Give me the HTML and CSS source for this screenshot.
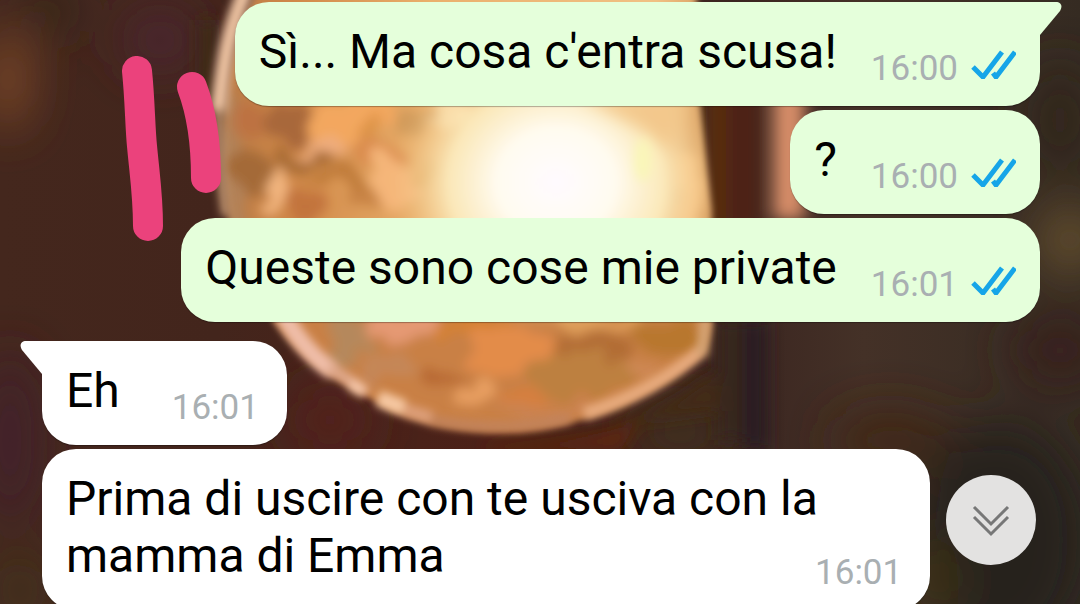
FILE: index.html
```
<!DOCTYPE html>
<html lang="it">
<head>
    <meta charset="UTF-8">
    <meta name="viewport" content="width=device-width, initial-scale=1.0">
    <title>Chat</title>
    <link rel="stylesheet" href="styles.css">
</head>
<body>
    <!-- wallpaper -->
    <svg class="wallpaper" viewBox="0 0 1080 604" preserveAspectRatio="xMidYMid slice" aria-hidden="true">
        <defs>
            <linearGradient id="wall" x1="0" y1="0" x2="1" y2="0">
                <stop offset="0" stop-color="#44271d"/>
                <stop offset=".2" stop-color="#43251c"/>
                <stop offset=".45" stop-color="#4c2118"/>
                <stop offset=".68" stop-color="#3b2520"/>
                <stop offset=".8" stop-color="#443127"/>
                <stop offset="1" stop-color="#352b22"/>
            </linearGradient>
            <linearGradient id="glass" x1="0" y1="0" x2="1" y2="0">
                <stop offset="0" stop-color="#a86f42"/>
                <stop offset=".2" stop-color="#d08848"/>
                <stop offset=".45" stop-color="#eab06c"/>
                <stop offset=".85" stop-color="#f1c184"/>
                <stop offset="1" stop-color="#c88a4c"/>
            </linearGradient>
            <radialGradient id="shine">
                <stop offset="0" stop-color="#fffaff"/>
                <stop offset=".35" stop-color="#fffbf0"/>
                <stop offset=".65" stop-color="#fdf0c4" stop-opacity=".85"/>
                <stop offset="1" stop-color="#f5c987" stop-opacity="0"/>
            </radialGradient>
            <filter id="b3" x="-50%" y="-50%" width="200%" height="200%"><feGaussianBlur stdDeviation="3"/></filter>
            <filter id="b4" x="-50%" y="-50%" width="200%" height="200%"><feGaussianBlur stdDeviation="4"/></filter>
            <filter id="b8" x="-50%" y="-50%" width="200%" height="200%"><feGaussianBlur stdDeviation="8"/></filter>
            <filter id="b24" x="-100%" y="-100%" width="300%" height="300%"><feGaussianBlur stdDeviation="24"/></filter>
            <!-- breaks the blobs up so that they look like light in glass -->
            <filter id="ripple" x="-20%" y="-20%" width="140%" height="140%">
                <feTurbulence type="fractalNoise" baseFrequency="0.028" numOctaves="2" seed="4" result="n"/>
                <feDisplacementMap in="SourceGraphic" in2="n" scale="50" xChannelSelector="R" yChannelSelector="G"/>
                <feGaussianBlur stdDeviation="5"/>
            </filter>
            <clipPath id="bowl"><path d="M262 -20 C224 50 214 130 226 210 C240 280 280 345 330 375 L390 410 C430 427 470 433 515 432 C580 428 650 400 700 356 C716 340 712 300 712 210 L700 100 L696 -20Z"/></clipPath>
        </defs>
        <rect width="1080" height="604" fill="url(#wall)"/>
        <g filter="url(#b24)">
            <ellipse cx="8" cy="80" rx="18" ry="50" fill="#87502a"/>
            <ellipse cx="160" cy="40" rx="36" ry="30" fill="#4b2630"/>
            <ellipse cx="50" cy="10" rx="30" ry="24" fill="#35261f"/>
            <ellipse cx="10" cy="440" rx="30" ry="90" fill="#43232a"/>
            <ellipse cx="20" cy="590" rx="30" ry="40" fill="#43301b"/>
            <ellipse cx="1060" cy="120" rx="34" ry="60" fill="#30261c"/>
            <ellipse cx="1070" cy="240" rx="34" ry="34" fill="#65502f"/>
            <ellipse cx="1060" cy="350" rx="50" ry="40" fill="#39221f"/>
            <ellipse cx="1000" cy="540" rx="90" ry="120" fill="#25201e"/>
            <ellipse cx="930" cy="580" rx="30" ry="40" fill="#3c3018"/>
            <ellipse cx="890" cy="440" rx="60" ry="30" fill="#3f2619"/>
            <ellipse cx="330" cy="420" rx="40" ry="40" fill="#53241e"/>
            <ellipse cx="680" cy="430" rx="50" ry="24" fill="#40311f"/>
        </g>
        <g filter="url(#b8)">
            <rect x="706" y="90" width="24" height="140" fill="#5a2f10"/>
            <rect x="726" y="90" width="36" height="140" fill="#4e2113"/>
            <rect x="773" y="70" width="32" height="150" fill="#d58c68"/>
            <rect x="718" y="320" width="24" height="120" fill="#38281f"/>
            <rect x="742" y="320" width="26" height="130" fill="#2b1d20"/>
            <rect x="200" y="20" width="14" height="110" fill="#3e2a16"/>
            <path d="M500 444 Q600 440 640 420 L620 450 H480Z" fill="#5e280f"/>
            <path d="M620 424 Q670 408 712 372 L720 410Z" fill="#432b13"/>
        </g>
        <g filter="url(#b3)">
            <g clip-path="url(#bowl)">
                <rect x="180" y="-40" width="560" height="510" fill="url(#glass)"/>
                <g filter="url(#ripple)">
                    <path d="M230 270 H730 V470 H230Z" fill="#c88047"/>
                    <ellipse cx="230" cy="170" rx="16" ry="70" fill="#b28259"/>
                    <ellipse cx="350" cy="120" rx="54" ry="22" fill="#f3a75e"/>
                    <ellipse cx="374" cy="128" rx="14" ry="14" fill="#dd9346"/>
                    <ellipse cx="255" cy="120" rx="16" ry="20" fill="#bd7242"/>
                    <ellipse cx="290" cy="122" rx="20" ry="18" fill="#a8683b"/>
                    <ellipse cx="320" cy="148" rx="22" ry="10" fill="#efad7e"/>
                    <ellipse cx="374" cy="154" rx="24" ry="9" fill="#d9894b"/>
                    <ellipse cx="294" cy="160" rx="26" ry="12" fill="#a96c34"/>
                    <ellipse cx="340" cy="178" rx="26" ry="12" fill="#c07c3a"/>
                    <ellipse cx="252" cy="176" rx="14" ry="28" fill="#a46b38"/>
                    <ellipse cx="274" cy="188" rx="13" ry="22" fill="#f2b57f"/>
                    <ellipse cx="305" cy="204" rx="22" ry="14" fill="#c2733c"/>
                    <ellipse cx="362" cy="196" rx="20" ry="12" fill="#c88344"/>
                    <ellipse cx="396" cy="182" rx="28" ry="26" fill="#f5b679"/>
                    <ellipse cx="425" cy="168" rx="14" ry="16" fill="#e0a45c"/>
                    <ellipse cx="418" cy="120" rx="14" ry="16" fill="#d09a5a"/>
                    <ellipse cx="450" cy="116" rx="22" ry="14" fill="#fadba9"/>
                    <ellipse cx="690" cy="190" rx="18" ry="42" fill="#f6c080"/>
                    <ellipse cx="345" cy="338" rx="26" ry="22" fill="#b08a62"/>
                    <ellipse cx="405" cy="326" rx="36" ry="17" fill="#eb9f80"/>
                    <ellipse cx="384" cy="370" rx="28" ry="16" fill="#c4895f"/>
                    <ellipse cx="475" cy="330" rx="34" ry="17" fill="#d7812f"/>
                    <ellipse cx="510" cy="352" rx="46" ry="18" fill="#e98f4e"/>
                    <ellipse cx="600" cy="326" rx="48" ry="10" fill="#e2a35e"/>
                    <ellipse cx="596" cy="350" rx="40" ry="14" fill="#ac6832"/>
                    <ellipse cx="580" cy="376" rx="44" ry="22" fill="#b9803f"/>
                    <ellipse cx="664" cy="336" rx="28" ry="20" fill="#b3752a"/>
                    <ellipse cx="640" cy="370" rx="24" ry="10" fill="#cf8b5a"/>
                    <ellipse cx="440" cy="376" rx="24" ry="12" fill="#b2622f"/>
                    <ellipse cx="476" cy="394" rx="16" ry="20" fill="#efa669"/>
                    <ellipse cx="520" cy="396" rx="22" ry="9" fill="#d97f3d"/>
                    <ellipse cx="550" cy="412" rx="54" ry="10" fill="#cb8354"/>
                </g>
                <ellipse cx="556" cy="182" rx="166" ry="150" fill="url(#shine)"/>
                <path d="M580 96 H690 L672 150 L640 128Z" fill="#f3c88c" filter="url(#b8)"/>
                <ellipse cx="643" cy="160" rx="9" ry="22" fill="#f9f6b8" filter="url(#b4)"/>
                <path d="M270 290 H720 V450 H300Z" fill="#cd843f" opacity=".2"/>
            </g>
        </g>
        <!-- rim of the glass -->
        <g fill="none" filter="url(#b4)">
            <path d="M246 -10 C228 30 224 60 218 112" stroke="#eac09f" stroke-width="16"/>
            <path d="M219 108 Q219 170 226 216" stroke="#b98f6d" stroke-width="9"/>
            <path d="M282 312 Q304 352 334 372" stroke="#efbda8" stroke-width="18"/>
            <path d="M328 368 Q352 380 366 394" stroke="#dfa88b" stroke-width="12"/>
            <path d="M350 384 L364 392" stroke="#f5c6a8" stroke-width="12"/>
            <path d="M378 398 L404 408" stroke="#f6c8a2" stroke-width="16"/>
            <path d="M404 410 L432 418" stroke="#dd9f79" stroke-width="13"/>
            <path d="M430 420 Q500 434 570 418" stroke="#c2835c" stroke-width="10"/>
            <path d="M584 414 Q654 392 702 350" stroke="#e8ac7f" stroke-width="13"/>
            <path d="M702 356 L706 316" stroke="#d5a474" stroke-width="12"/>
        </g>
    </svg>

    <!-- marker strokes -->
    <svg class="marker" viewBox="0 0 100 186" aria-hidden="true">
        <path d="M15 15C18 44 18 70 20 90C23 122 26 140 26 170"/>
        <path d="M70 31Q84 68 84 122"/>
    </svg>

    <main class="chat">
        <div class="message out first">
            <svg class="tail" viewBox="0 0 22 34" aria-hidden="true"><path d="M0 0H16C21 0 23 4 20 9L0 33Z"/></svg>
            <p>Sì... Ma cosa c'entra scusa!</p>
            <div class="meta">
                <time>16:00</time>
                <svg class="ticks" viewBox="0 0 46 30" role="img" aria-label="Letto"><path d="M3 18L13 28L32 3M23 24L26 28L45 3"/></svg>
            </div>
        </div>
        <div class="message out">
            <p>?</p>
            <div class="meta">
                <time>16:00</time>
                <svg class="ticks" viewBox="0 0 46 30" role="img" aria-label="Letto"><path d="M3 18L13 28L32 3M23 24L26 28L45 3"/></svg>
            </div>
        </div>
        <div class="message out">
            <p>Queste sono cose mie private</p>
            <div class="meta">
                <time>16:01</time>
                <svg class="ticks" viewBox="0 0 46 30" role="img" aria-label="Letto"><path d="M3 18L13 28L32 3M23 24L26 28L45 3"/></svg>
            </div>
        </div>
        <div class="message in first">
            <svg class="tail" viewBox="0 0 22 34" aria-hidden="true"><path d="M22 0H6C1 0 -1 4 2 9L22 33Z"/></svg>
            <p>Eh</p>
            <div class="meta"><time>16:01</time></div>
        </div>
        <div class="message in long">
            <p>Prima di uscire con te usciva con la mamma di Emma</p>
            <div class="meta"><time>16:01</time></div>
        </div>
    </main>

    <button class="scroll-down" type="button" aria-label="Vai in fondo">
        <svg viewBox="0 0 40 34" aria-hidden="true"><path d="M3 4L20 21L37 4M3 14L20 31L37 14"/></svg>
    </button>
</body>
</html>
```

FILE: styles.css
```
* {
    box-sizing: border-box;
}

body {
    margin: 0;
    height: 100vh;
    overflow: hidden;
    background-color: #43271d;
    color: #000;
    font-family: Roboto, sans-serif;
}

.wallpaper {
    position: absolute;
    top: 0;
    left: 0;
    width: 100%;
    height: 100%;
}

.marker {
    position: absolute;
    top: 56px;
    left: 122px;
    width: 100px;
    height: 186px;
    fill: none;
    stroke: #eb427c;
    stroke-width: 30;
    stroke-linecap: round;
    stroke-linejoin: round;
}

.chat {
    position: relative;
    display: flex;
    flex-direction: column;
    gap: 4px;
    padding: 2px 40px 0 42px;
}

.message {
    position: relative;
    display: flex;
    align-items: flex-end;
    max-width: 89%;
    padding: 21px 24px 17px 24px;
    border-radius: 34px;
    box-shadow: 0 1px 1px rgba(0, 0, 0, 0.3);
}

.message p {
    margin: 0 0 9px;
    font-size: 48px;
    line-height: 57px;
}

.out {
    align-self: flex-end;
    gap: 34px;
    background-color: #e5ffdb;
}

.in {
    align-self: flex-start;
    gap: 52px;
    padding-right: 28px;
    background-color: #fff;
}

.out.first {
    border-top-right-radius: 0;
}

.in.first {
    margin-top: 15px;
    border-top-left-radius: 0;
}

.long {
    display: grid;
}

.long p,
.long .meta {
    grid-area: 1 / 1;
}

.long .meta {
    align-self: end;
    justify-self: end;
}

.tail {
    position: absolute;
    top: 0;
    width: 22px;
    height: 34px;
}

.out .tail {
    left: 100%;
    fill: #e5ffdb;
}

.in .tail {
    right: 100%;
    fill: #fff;
}

.meta {
    display: flex;
    align-items: flex-start;
    gap: 12px;
    color: #a9afb2;
    font-size: 35px;
    line-height: 40px;
}

.ticks {
    width: 46px;
    height: 30px;
    fill: none;
    stroke: #16a5e8;
    stroke-width: 5;
}

.scroll-down {
    position: absolute;
    right: 44px;
    bottom: 39px;
    display: flex;
    align-items: center;
    justify-content: center;
    width: 90px;
    height: 90px;
    padding: 0;
    border: none;
    border-radius: 50%;
    background-color: #e3e2e1;
    cursor: pointer;
}

.scroll-down svg {
    width: 40px;
    height: 34px;
    fill: none;
    stroke: #777;
    stroke-width: 3;
}
```
